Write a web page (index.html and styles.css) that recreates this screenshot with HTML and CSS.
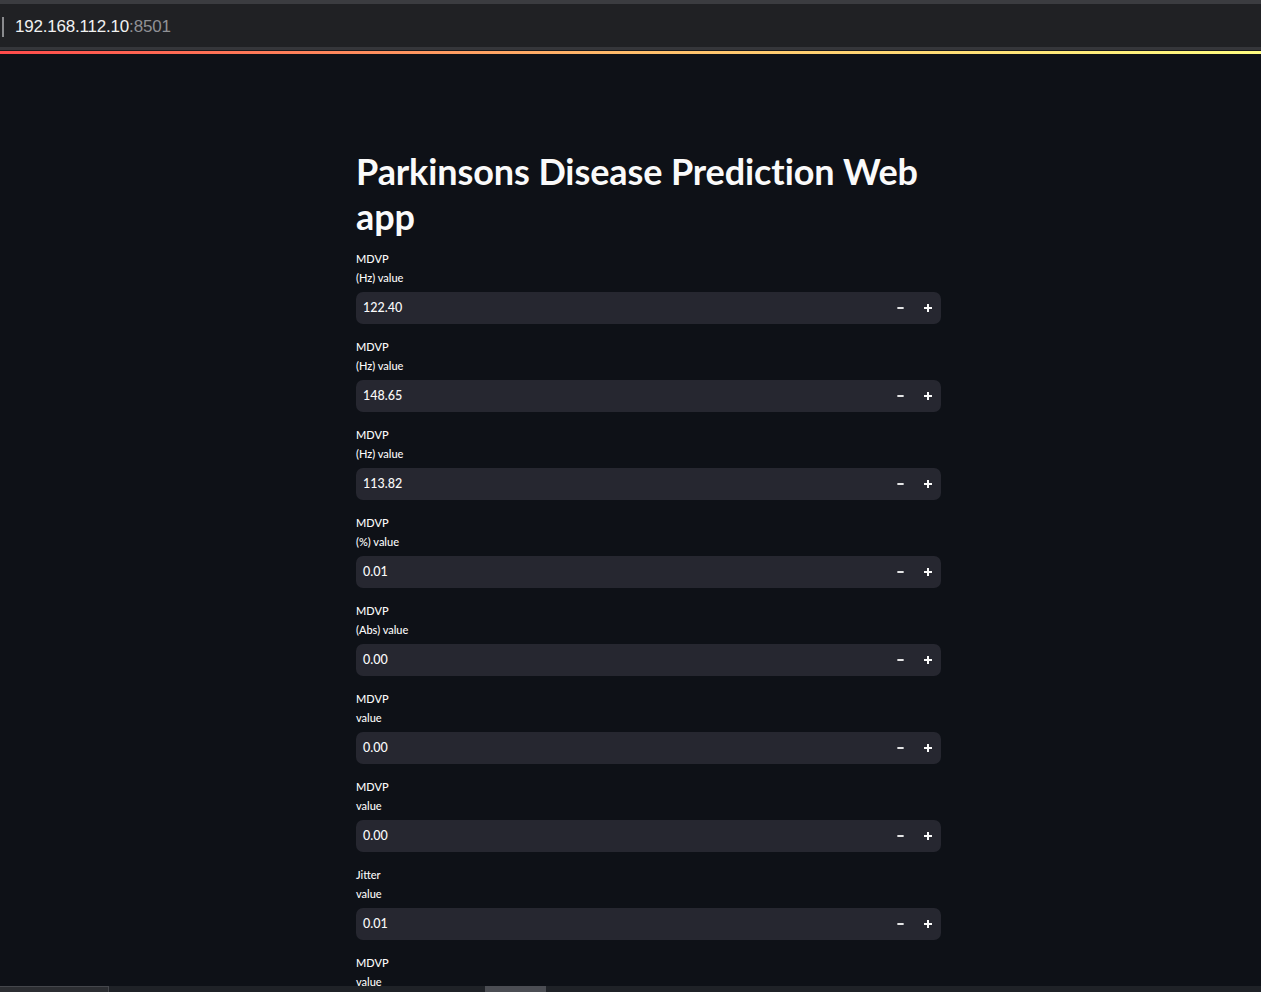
FILE: index.html
```html
<!DOCTYPE html>
<html lang="en">
<head>
<meta charset="utf-8">
<title>Parkinsons Disease Prediction Web app</title>
<link rel="stylesheet" href="styles.css">
</head>
<body>
<div class="window">
  <header class="browser-chrome">
    <div class="chrome-top"></div>
    <div class="address-bar">
      <span class="caret"></span>
      <span class="url"><span class="host">192.168.112.10</span><span class="port">:8501</span></span>
    </div>
    <div class="chrome-bottom"></div>
    <div class="chrome-gap"></div>
    <div class="decoration"></div>
  </header>

  <main class="app">
    <section class="block">
      <h1 class="title">Parkinsons Disease Prediction Web app</h1>

      <div class="field">
        <label class="field-label"><span>MDVP</span><span>(Hz) value</span></label>
        <div class="number-input"><span class="value">122.40</span><span class="step minus"><svg viewBox="0 0 10 10"><path d="M1.5 5h7"/></svg></span><span class="step plus"><svg viewBox="0 0 10 10"><path d="M1 5h8M5 1v8"/></svg></span></div>
      </div>

      <div class="field">
        <label class="field-label"><span>MDVP</span><span>(Hz) value</span></label>
        <div class="number-input"><span class="value">148.65</span><span class="step minus"><svg viewBox="0 0 10 10"><path d="M1.5 5h7"/></svg></span><span class="step plus"><svg viewBox="0 0 10 10"><path d="M1 5h8M5 1v8"/></svg></span></div>
      </div>

      <div class="field">
        <label class="field-label"><span>MDVP</span><span>(Hz) value</span></label>
        <div class="number-input"><span class="value">113.82</span><span class="step minus"><svg viewBox="0 0 10 10"><path d="M1.5 5h7"/></svg></span><span class="step plus"><svg viewBox="0 0 10 10"><path d="M1 5h8M5 1v8"/></svg></span></div>
      </div>

      <div class="field">
        <label class="field-label"><span>MDVP</span><span>(%) value</span></label>
        <div class="number-input"><span class="value">0.01</span><span class="step minus"><svg viewBox="0 0 10 10"><path d="M1.5 5h7"/></svg></span><span class="step plus"><svg viewBox="0 0 10 10"><path d="M1 5h8M5 1v8"/></svg></span></div>
      </div>

      <div class="field">
        <label class="field-label"><span>MDVP</span><span>(Abs) value</span></label>
        <div class="number-input"><span class="value">0.00</span><span class="step minus"><svg viewBox="0 0 10 10"><path d="M1.5 5h7"/></svg></span><span class="step plus"><svg viewBox="0 0 10 10"><path d="M1 5h8M5 1v8"/></svg></span></div>
      </div>

      <div class="field">
        <label class="field-label"><span>MDVP</span><span>value</span></label>
        <div class="number-input"><span class="value">0.00</span><span class="step minus"><svg viewBox="0 0 10 10"><path d="M1.5 5h7"/></svg></span><span class="step plus"><svg viewBox="0 0 10 10"><path d="M1 5h8M5 1v8"/></svg></span></div>
      </div>

      <div class="field">
        <label class="field-label"><span>MDVP</span><span>value</span></label>
        <div class="number-input"><span class="value">0.00</span><span class="step minus"><svg viewBox="0 0 10 10"><path d="M1.5 5h7"/></svg></span><span class="step plus"><svg viewBox="0 0 10 10"><path d="M1 5h8M5 1v8"/></svg></span></div>
      </div>

      <div class="field">
        <label class="field-label"><span>Jitter</span><span>value</span></label>
        <div class="number-input"><span class="value">0.01</span><span class="step minus"><svg viewBox="0 0 10 10"><path d="M1.5 5h7"/></svg></span><span class="step plus"><svg viewBox="0 0 10 10"><path d="M1 5h8M5 1v8"/></svg></span></div>
      </div>

      <div class="field">
        <label class="field-label"><span>MDVP</span><span>value</span></label>
        <div class="number-input"><span class="value">0.00</span><span class="step minus"><svg viewBox="0 0 10 10"><path d="M1.5 5h7"/></svg></span><span class="step plus"><svg viewBox="0 0 10 10"><path d="M1 5h8M5 1v8"/></svg></span></div>
      </div>
    </section>
  </main>

  <footer class="hscroll">
    <div class="hscroll-left"></div>
    <div class="hscroll-thumb"></div>
  </footer>
</div>
</body>
</html>
```

FILE: styles.css
```css
html, body {
  margin: 0;
  padding: 0;
  height: 100%;
  overflow: hidden;
  background: #0e1117;
}

.window {
  display: flex;
  flex-direction: column;
  height: 992px;
  width: 1261px;
}

/* browser chrome */
.browser-chrome {
  flex: none;
  display: flex;
  flex-direction: column;
}
.chrome-top {
  height: 4px;
  background: #3b3c40;
}
.address-bar {
  height: 43px;
  background: #202124;
  display: flex;
  align-items: center;
  gap: 11px;
  padding-left: 2px;
}
.caret {
  width: 2px;
  height: 20px;
  background: #8a8b8e;
  margin-top: 2px;
}
.url {
  font-family: "Liberation Sans", Arial, sans-serif;
  font-size: 17px;
  letter-spacing: -0.2px;
  padding-top: 2px;
}
.host { color: #f1f1f1; }
.port { color: #8f9094; }
.chrome-bottom {
  height: 3px;
  background: #35363a;
}
.chrome-gap {
  height: 1px;
  background: #1a1b1f;
}
.decoration {
  height: 3px;
  background: linear-gradient(90deg, #ff4b4b 0%, #ffbd6b 50%, #fffd80 100%);
}

/* app */
.app {
  flex: 1;
  overflow: hidden;
  background: #0e1117;
  color: #fafafa;
}
.block {
  margin-left: 356px;
  width: 585px;
  padding-top: 95px;
  display: flex;
  flex-direction: column;
}
.title {
  margin: 0 0 10px;
  font-family: Lato, "Noto Sans", sans-serif;
  font-weight: 700;
  font-size: 36px;
  line-height: 45px;
  letter-spacing: -0.1px;
  color: #fafafa;
}

.field {
  display: flex;
  flex-direction: column;
  margin-bottom: 13px;
}
.field-label {
  display: flex;
  flex-direction: column;
  font-family: Lato, "Noto Sans", sans-serif;
  font-size: 11px;
  font-weight: 500;
  line-height: 19px;
  color: #fafafa;
  padding-bottom: 1px;
  margin-bottom: 4px;
}
.number-input {
  height: 32px;
  background: #262730;
  border-radius: 7px;
  display: flex;
  align-items: center;
}
.value {
  flex: 1;
  padding-left: 7px;
  padding-bottom: 2px;
  font-family: Lato, "Noto Sans", sans-serif;
  font-size: 12.5px;
  font-weight: 500;
  color: #fafafa;
}
.step {
  width: 27px;
  height: 32px;
  display: flex;
  align-items: center;
  justify-content: center;
}
.step svg {
  width: 10px;
  height: 10px;
  fill: none;
  stroke: #fafafa;
  stroke-width: 2;
}
.minus svg { width: 9px; }

/* bottom horizontal scrollbar */
.hscroll {
  flex: none;
  height: 6px;
  background: #1f2227;
  display: flex;
}
.hscroll-left {
  width: 109px;
  height: 6px;
  box-sizing: border-box;
  background: #2c2e32;
  border-top: 1px solid #45474c;
  border-right: 1px solid #45474c;
}
.hscroll-thumb {
  margin-left: 376px;
  width: 61px;
  height: 6px;
  background: #4b4d53;
}
```
